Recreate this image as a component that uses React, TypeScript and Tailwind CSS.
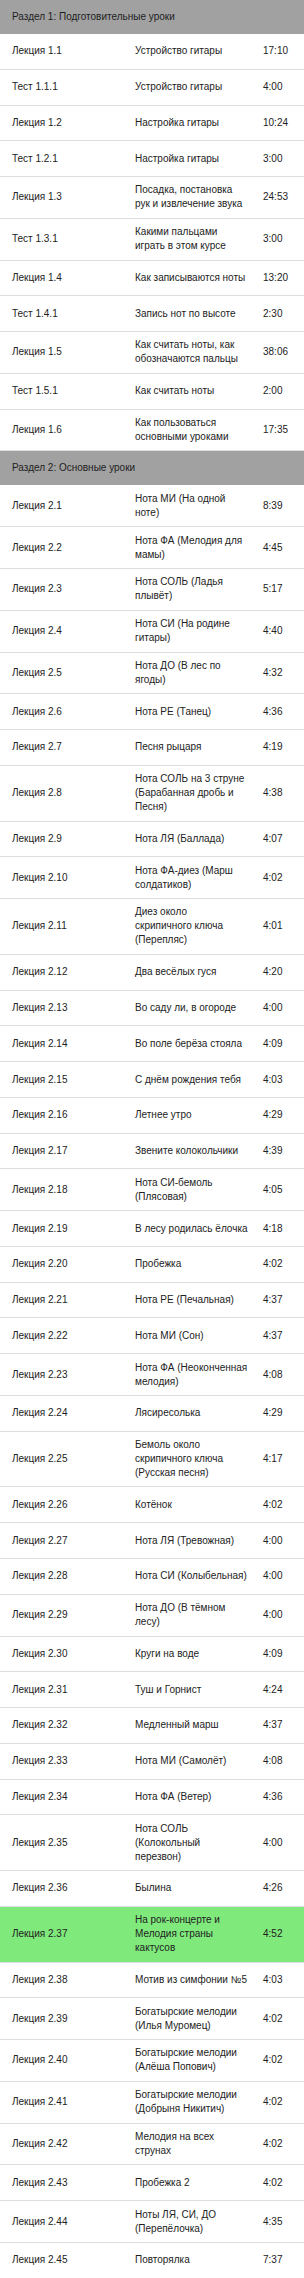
type Lesson = { code: string; title: string[]; time: string; active?: boolean }
type Section = { name: string; lessons: Lesson[] }

const sections: Section[] = [
  {
    name: 'Раздел 1: Подготовительные уроки',
    lessons: [
      { code: 'Лекция 1.1', title: ['Устройство гитары'], time: '17:10' },
      { code: 'Тест 1.1.1', title: ['Устройство гитары'], time: '4:00' },
      { code: 'Лекция 1.2', title: ['Настройка гитары'], time: '10:24' },
      { code: 'Тест 1.2.1', title: ['Настройка гитары'], time: '3:00' },
      { code: 'Лекция 1.3', title: ['Посадка, постановка', 'рук и извлечение звука'], time: '24:53' },
      { code: 'Тест 1.3.1', title: ['Какими пальцами', 'играть в этом курсе'], time: '3:00' },
      { code: 'Лекция 1.4', title: ['Как записываются ноты'], time: '13:20' },
      { code: 'Тест 1.4.1', title: ['Запись нот по высоте'], time: '2:30' },
      { code: 'Лекция 1.5', title: ['Как считать ноты, как', 'обозначаются пальцы'], time: '38:06' },
      { code: 'Тест 1.5.1', title: ['Как считать ноты'], time: '2:00' },
      { code: 'Лекция 1.6', title: ['Как пользоваться', 'основными уроками'], time: '17:35' },
    ],
  },
  {
    name: 'Раздел 2: Основные уроки',
    lessons: [
      { code: 'Лекция 2.1', title: ['Нота МИ (На одной', 'ноте)'], time: '8:39' },
      { code: 'Лекция 2.2', title: ['Нота ФА (Мелодия для', 'мамы)'], time: '4:45' },
      { code: 'Лекция 2.3', title: ['Нота СОЛЬ (Ладья', 'плывёт)'], time: '5:17' },
      { code: 'Лекция 2.4', title: ['Нота СИ (На родине', 'гитары)'], time: '4:40' },
      { code: 'Лекция 2.5', title: ['Нота ДО (В лес по', 'ягоды)'], time: '4:32' },
      { code: 'Лекция 2.6', title: ['Нота РЕ (Танец)'], time: '4:36' },
      { code: 'Лекция 2.7', title: ['Песня рыцаря'], time: '4:19' },
      { code: 'Лекция 2.8', title: ['Нота СОЛЬ на 3 струне', '(Барабанная дробь и', 'Песня)'], time: '4:38' },
      { code: 'Лекция 2.9', title: ['Нота ЛЯ (Баллада)'], time: '4:07' },
      { code: 'Лекция 2.10', title: ['Нота ФА-диез (Марш', 'солдатиков)'], time: '4:02' },
      { code: 'Лекция 2.11', title: ['Диез около', 'скрипичного ключа', '(Перепляс)'], time: '4:01' },
      { code: 'Лекция 2.12', title: ['Два весёлых гуся'], time: '4:20' },
      { code: 'Лекция 2.13', title: ['Во саду ли, в огороде'], time: '4:00' },
      { code: 'Лекция 2.14', title: ['Во поле берёза стояла'], time: '4:09' },
      { code: 'Лекция 2.15', title: ['С днём рождения тебя'], time: '4:03' },
      { code: 'Лекция 2.16', title: ['Летнее утро'], time: '4:29' },
      { code: 'Лекция 2.17', title: ['Звените колокольчики'], time: '4:39' },
      { code: 'Лекция 2.18', title: ['Нота СИ-бемоль', '(Плясовая)'], time: '4:05' },
      { code: 'Лекция 2.19', title: ['В лесу родилась ёлочка'], time: '4:18' },
      { code: 'Лекция 2.20', title: ['Пробежка'], time: '4:02' },
      { code: 'Лекция 2.21', title: ['Нота РЕ (Печальная)'], time: '4:37' },
      { code: 'Лекция 2.22', title: ['Нота МИ (Сон)'], time: '4:37' },
      { code: 'Лекция 2.23', title: ['Нота ФА (Неоконченная', 'мелодия)'], time: '4:08' },
      { code: 'Лекция 2.24', title: ['Лясиресолька'], time: '4:29' },
      { code: 'Лекция 2.25', title: ['Бемоль около', 'скрипичного ключа', '(Русская песня)'], time: '4:17' },
      { code: 'Лекция 2.26', title: ['Котёнок'], time: '4:02' },
      { code: 'Лекция 2.27', title: ['Нота ЛЯ (Тревожная)'], time: '4:00' },
      { code: 'Лекция 2.28', title: ['Нота СИ (Колыбельная)'], time: '4:00' },
      { code: 'Лекция 2.29', title: ['Нота ДО (В тёмном', 'лесу)'], time: '4:00' },
      { code: 'Лекция 2.30', title: ['Круги на воде'], time: '4:09' },
      { code: 'Лекция 2.31', title: ['Туш и Горнист'], time: '4:24' },
      { code: 'Лекция 2.32', title: ['Медленный марш'], time: '4:37' },
      { code: 'Лекция 2.33', title: ['Нота МИ (Самолёт)'], time: '4:08' },
      { code: 'Лекция 2.34', title: ['Нота ФА (Ветер)'], time: '4:36' },
      { code: 'Лекция 2.35', title: ['Нота СОЛЬ', '(Колокольный', 'перезвон)'], time: '4:00' },
      { code: 'Лекция 2.36', title: ['Былина'], time: '4:26' },
      { code: 'Лекция 2.37', title: ['На рок-концерте и', 'Мелодия страны', 'кактусов'], time: '4:52', active: true },
      { code: 'Лекция 2.38', title: ['Мотив из симфонии №5'], time: '4:03' },
      { code: 'Лекция 2.39', title: ['Богатырские мелодии', '(Илья Муромец)'], time: '4:02' },
      { code: 'Лекция 2.40', title: ['Богатырские мелодии', '(Алёша Попович)'], time: '4:02' },
      { code: 'Лекция 2.41', title: ['Богатырские мелодии', '(Добрыня Никитич)'], time: '4:02' },
      { code: 'Лекция 2.42', title: ['Мелодия на всех', 'струнах'], time: '4:02' },
      { code: 'Лекция 2.43', title: ['Пробежка 2'], time: '4:02' },
      { code: 'Лекция 2.44', title: ['Ноты ЛЯ, СИ, ДО', '(Перепёлочка)'], time: '4:35' },
      { code: 'Лекция 2.45', title: ['Повторялка'], time: '7:37' },
    ],
  },
]

function LessonRow({ lesson }: { lesson: Lesson }) {
  return (
    <div
      className={`grid grid-cols-[123px_128px_1fr] items-center min-h-[35.75px] py-[6.4px] border-b border-[#dedede] ${
        lesson.active ? 'bg-[#7fe97c]' : 'bg-white'
      }`}
    >
      <span className="pl-3">{lesson.code}</span>
      <span className="pl-3 whitespace-nowrap">
        {lesson.title.map((line) => (
          <span key={line} className="block">
            {line}
          </span>
        ))}
      </span>
      <span className="pl-3">{lesson.time}</span>
    </div>
  )
}

export default function App() {
  return (
    <div
      className="w-[304px] bg-white text-[10px] leading-[14px] text-[#222]"
      style={{ fontFamily: '"Liberation Sans", Arial, sans-serif' }}
    >
      {sections.map((s) => (
        <section key={s.name}>
          {/* section band */}
          <div className="h-[34px] flex items-center pl-3 bg-[#a1a1a1] text-[#1e1e1e]">{s.name}</div>
          {s.lessons.map((l) => (
            <LessonRow key={l.code} lesson={l} />
          ))}
        </section>
      ))}
    </div>
  )
}
